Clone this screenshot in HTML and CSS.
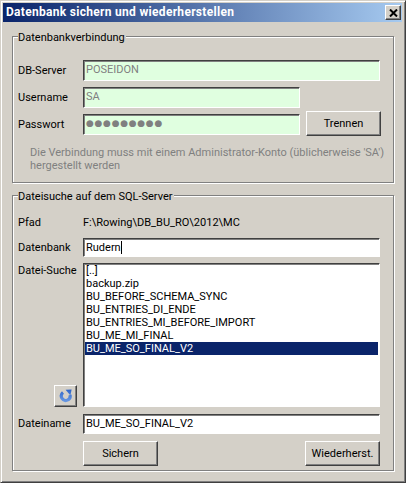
FILE: index.html
```html
<!DOCTYPE html>
<html lang="de">
<head>
<meta charset="utf-8">
<title>Datenbank sichern und wiederherstellen</title>
<link rel="stylesheet" href="styles.css">
</head>
<body>
<div class="window">
  <div class="titlebar">
    <span class="title">Datenbank sichern und wiederherstellen</span>
    <button class="close" aria-label="Schließen"><svg width="9" height="8" viewBox="0 0 9 8"><path d="M1 0.5L8 7.5M8 0.5L1 7.5" stroke="#000" stroke-width="2" fill="none"/></svg></button>
  </div>
  <div class="content">
    <section class="group group-conn">
      <div class="legend">Datenbankverbindung</div>
      <div class="conn-grid">
        <label class="label">DB-Server</label>
        <div class="field field-ok field-wide">POSEIDON</div>
        <label class="label">Username</label>
        <div class="field field-ok">SA</div>
        <span></span>
        <label class="label">Passwort</label>
        <div class="field field-ok field-dots">●●●●●●●●●</div>
        <button class="btn btn-trennen">Trennen</button>
      </div>
      <p class="note">Die Verbindung muss mit einem Administrator-Konto (üblicherweise 'SA') hergestellt werden</p>
    </section>
    <section class="group group-files">
      <div class="legend">Dateisuche auf dem SQL-Server</div>
      <div class="file-grid">
        <label class="label label-top">Pfad</label>
        <div class="path">F:\Rowing\DB_BU_RO\2012\MC</div>
        <label class="label">Datenbank</label>
        <div class="field">Rudern<span class="caret"></span></div>
        <div class="search-side">
          <label class="label label-top">Datei-Suche</label>
          <button class="btn-icon" aria-label="Aktualisieren"><svg width="14" height="14" viewBox="0 0 14 14"><defs><linearGradient id="ring" x1="0" y1="0" x2="0" y2="14" gradientUnits="userSpaceOnUse"><stop offset="0" stop-color="#2a62c8"/><stop offset="1" stop-color="#6f9ee6"/></linearGradient></defs><path d="M4 3.6A4.4 4.4 0 1 0 11 6" stroke="url(#ring)" stroke-width="3.2" fill="none"/><path d="M6.6 0.8L12.6 0.6L11.4 6.4Z" fill="url(#ring)"/></svg></button>
        </div>
        <ul class="list">
          <li>[..]</li>
          <li>backup.zip</li>
          <li>BU_BEFORE_SCHEMA_SYNC</li>
          <li>BU_ENTRIES_DI_ENDE</li>
          <li>BU_ENTRIES_MI_BEFORE_IMPORT</li>
          <li>BU_ME_MI_FINAL</li>
          <li class="selected">BU_ME_SO_FINAL_V2</li>
        </ul>
        <label class="label">Dateiname</label>
        <div class="field field-name">BU_ME_SO_FINAL_V2</div>
        <span></span>
        <div class="actions">
          <button class="btn">Sichern</button>
          <button class="btn">Wiederherst.</button>
        </div>
      </div>
    </section>
  </div>
</div>
</body>
</html>
```
FILE: styles.css
```css
* { box-sizing: border-box; }
html, body { margin: 0; padding: 0; }
body {
  width: 406px;
  height: 483px;
  font-family: Roboto, sans-serif;
  font-size: 11px;
  line-height: 13px;
  color: #000;
  background: #d4d0c8;
}
.window {
  width: 406px;
  height: 483px;
  padding: 2px 3px 2px 2px;
  background: #d4d0c8;
  border: 1px solid #404040;
  border-top-color: #d4d0c8;
  border-left-color: #d4d0c8;
  box-shadow: inset 1px 1px 0 #fff, inset -1px -1px 0 #808080;
}
.titlebar {
  height: 19px;
  padding: 0 1px 0 3px;
  display: flex;
  align-items: center;
  justify-content: space-between;
  background: linear-gradient(90deg, #0a246a, #a6caf0);
}
.title {
  color: #fff;
  font-weight: 700;
  font-size: 12px;
  letter-spacing: 0.3px;
}
.close {
  width: 16px;
  height: 15px;
  padding: 0;
  display: flex;
  align-items: center;
  justify-content: center;
  background: #d4d0c8;
  border: 1px solid #404040;
  border-top-color: #fff;
  border-left-color: #fff;
  box-shadow: inset -1px -1px 0 #808080;
}
.content {
  padding: 14px 9px 0;
  display: flex;
  flex-direction: column;
  gap: 12px;
}
.group {
  position: relative;
  width: 382px;
  border: 1px solid #808080;
  box-shadow: inset 1px 1px 0 #fff, 1px 1px 0 #fff;
  padding-left: 5px;
}
.legend {
  position: absolute;
  top: -6px;
  left: 5px;
  background: #d4d0c8;
  padding-right: 1px;
}
.group-conn { height: 147px; padding-top: 23px; }
.group-files { height: 276px; padding-top: 20px; }
.label { display: block; align-self: center; }
.label-top { align-self: flex-start; }
.conn-grid {
  display: grid;
  grid-template-columns: 65px 217px 81px;
  grid-template-rows: 21px 21px 21px;
  row-gap: 6px;
}
.field {
  height: 100%;
  padding: 2px 0 0 2px;
  background: #fff;
  border: 1px solid #fff;
  border-top-color: #404040;
  border-left-color: #404040;
  box-shadow: inset 1px 1px 0 #808080;
  white-space: nowrap;
}
.field-ok { background: #e0ffe0; color: #808080; }
.field-wide { width: 297px; grid-column: span 2; }
.field-name { height: 20px; margin-top: 1px; }
.field-dots {
  font-family: "DejaVu Sans", sans-serif;
  font-size: 9px;
  letter-spacing: 0.7px;
}
.btn {
  width: 75px;
  height: 25px;
  padding: 0;
  font: inherit;
  color: #000;
  background: #d4d0c8;
  border: 1px solid #404040;
  border-top-color: #fff;
  border-left-color: #fff;
  box-shadow: inset -1px -1px 0 #808080;
}
.btn-trennen {
  align-self: start;
  margin: -3px 0 0 6px;
}
.note {
  margin: 11px 0 0 12px;
  width: 358px;
  color: #808080;
}
.file-grid {
  display: grid;
  grid-template-columns: 65px 297px;
  grid-template-rows: 16px 19px 144px 21px 26px;
  row-gap: 6px;
}
.path { align-self: start; }
.caret {
  display: inline-block;
  width: 1px;
  height: 13px;
  background: #000;
  vertical-align: top;
}
.search-side {
  display: flex;
  flex-direction: column;
  justify-content: space-between;
  align-items: flex-start;
  padding-top: 1px;
}
.btn-icon {
  width: 23px;
  height: 22px;
  margin-left: 36px;
  padding: 0;
  display: flex;
  align-items: center;
  justify-content: center;
  background: #d4d0c8;
  border: 1px solid #404040;
  border-top-color: #fff;
  border-left-color: #fff;
  box-shadow: inset -1px -1px 0 #808080;
}
.list {
  margin: 0;
  padding: 0 1px;
  list-style: none;
  background: #fff;
  border: 1px solid #fff;
  border-top-color: #404040;
  border-left-color: #404040;
  box-shadow: inset 1px 1px 0 #808080;
}
.list li { height: 13px; padding-left: 1px; white-space: nowrap; }
.list .selected { background: #0a246a; color: #fff; }
.actions {
  display: flex;
  justify-content: space-between;
  margin-top: 1px;
}
```
